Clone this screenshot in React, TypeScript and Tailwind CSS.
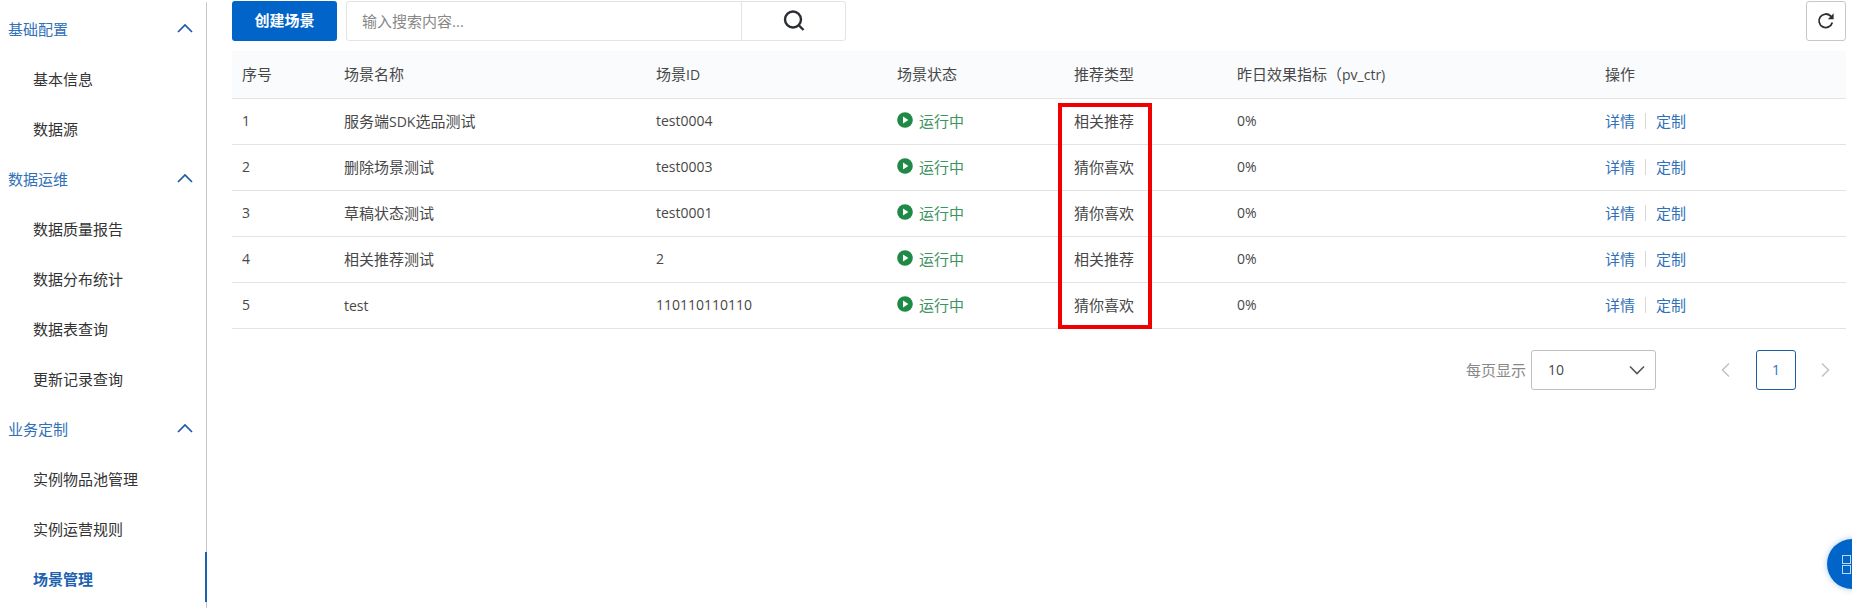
import React from "react";

const font = { fontFamily: '"Open Sans","Noto Sans CJK SC",sans-serif' };

const groups = [
  { title: "基础配置", items: ["基本信息", "数据源"] },
  { title: "数据运维", items: ["数据质量报告", "数据分布统计", "数据表查询", "更新记录查询"] },
  { title: "业务定制", items: ["实例物品池管理", "实例运营规则", "场景管理"] },
];

const rows: [string, React.ReactNode, string, string][] = [
  ["1", <>服务端<span className="text-[14px]">SDK</span>选品测试</>, "test0004", "相关推荐"],
  ["2", "删除场景测试", "test0003", "猜你喜欢"],
  ["3", "草稿状态测试", "test0001", "猜你喜欢"],
  ["4", "相关推荐测试", "2", "相关推荐"],
  ["5", <span className="text-[14px]">test</span>, "110110110110", "猜你喜欢"],
];

function Chevron({ d, className }: { d: string; className: string }) {
  return (
    <svg viewBox="0 0 16 16" fill="none" stroke="currentColor" className={className}>
      <path d={d} />
    </svg>
  );
}

function Sidebar() {
  return (
    <aside className="w-[207px] shrink-0 h-[606px] mt-[2px] border-r border-[#c8c8c8] pt-[2px]">
      {groups.map((g) => (
        <div key={g.title}>
          <div className="h-[50px] flex items-center justify-between pl-[8px] pr-[13px] text-[#2f70b8]">
            <span>{g.title}</span>
            <Chevron d="M1 11 8 4l7 7" className="w-[16px] h-[16px] stroke-[1.7] text-[#1a5aa5]" />
          </div>
          {g.items.map((it) => {
            const active = it === "场景管理";
            return (
              <div
                key={it}
                className={
                  active
                    ? "relative h-[50px] flex items-center pl-[33px] font-bold text-[#1c62b0]"
                    : "h-[50px] flex items-center pl-[33px] text-[#333333]"
                }
              >
                {it}
                {active && <span className="absolute right-[-1px] top-[-2px] w-[2px] h-[50px] bg-[#1c62b0]" />}
              </div>
            );
          })}
        </div>
      ))}
    </aside>
  );
}

function Status() {
  return (
    <span className="flex items-center gap-[6px] text-[#3c9460]">
      <svg viewBox="0 0 16 16" className="w-[16px] h-[16px] -translate-y-px">
        <circle cx="8" cy="8" r="7.8" fill="#1f8a45" />
        <path d="M6 4.6 11.4 8 6 11.4Z" fill="#fff" />
      </svg>
      运行中
    </span>
  );
}

export default function App() {
  return (
    <div
      style={font}
      className="relative flex w-[1852px] h-[608px] overflow-hidden bg-white text-[15px] leading-[20px] text-[#484848]"
    >
      <Sidebar />
      <main className="flex-1 pl-[25px] pr-[6px] pt-[1px]">
        <div className="flex items-center justify-between h-[40px]">
          <div className="flex h-full">
            <button className="w-[105px] h-[40px] pb-[3px] rounded-[3px] bg-[#0064c8] text-white font-bold text-[15px]">
              创建场景
            </button>
            <div className="ml-[9px] flex w-[500px] h-[40px] rounded-[3px] border border-[#e3e3e3]">
              <div className="flex-1 flex items-center pl-[15px] text-[#888888]">输入搜索内容...</div>
              <div className="w-[104px] flex items-center justify-center border-l border-[#e3e3e3]">
                <svg viewBox="0 0 24 24" fill="none" stroke="#2b2f33" strokeWidth="2.4" className="w-[24px] h-[24px]">
                  <circle cx="11" cy="10.5" r="8" />
                  <path d="m17 16.5 4.5 4.5" />
                </svg>
              </div>
            </div>
          </div>
          <button className="w-[40px] h-[40px] rounded-[3px] border border-[#c8c8c8] flex items-center justify-center">
            <svg viewBox="0 0 16 16" fill="none" stroke="#2b2f33" strokeWidth="1.6" className="w-[18px] h-[18px]">
              <path d="M13.6 9.4A6 6 0 1 1 12.2 3.7L14 5.4" />
              <path d="M14.8 1.2v5.2H9.6Z" fill="#2b2f33" stroke="none" />
            </svg>
          </button>
        </div>

        <table className="mt-[10px] w-[1614px] table-fixed border-collapse text-left">
          <colgroup>
            <col className="w-[102px]" />
            <col className="w-[312px]" />
            <col className="w-[241px]" />
            <col className="w-[177px]" />
            <col className="w-[163px]" />
            <col className="w-[368px]" />
            <col />
          </colgroup>
          <thead>
            <tr className="h-[47px] bg-[#f9fbfd] border-b border-[#e3e3e3]">
              {[
                "序号",
                "场景名称",
                <>场景<span className="text-[14px]">ID</span></>,
                "场景状态",
                "推荐类型",
                <>昨日效果指标（<span className="text-[14px]">pv_ctr)</span></>,
                "操作",
              ].map((h, i) => (
                <th key={i} className="pl-[10px] font-normal text-[#484848]">
                  {h}
                </th>
              ))}
            </tr>
          </thead>
          <tbody>
            {rows.map((r) => (
              <tr key={r[0]} className="h-[46px] border-b border-[#e3e3e3]">
                <td className="pl-[10px] text-[14px]">{r[0]}</td>
                <td className="pl-[10px]">{r[1]}</td>
                <td className="pl-[10px] text-[14px]">{r[2]}</td>
                <td className="pl-[10px]">
                  <Status />
                </td>
                <td className="pl-[10px]">{r[3]}</td>
                <td className="pl-[10px] text-[14px]">0%</td>
                <td className="pl-[10px]">
                  <span className="flex items-center text-[#2f70b8]">
                    详情
                    <span className="mx-[10px] w-px h-[16px] bg-[#d8d8d8]" />
                    定制
                  </span>
                </td>
              </tr>
            ))}
          </tbody>
        </table>

        <div className="mt-[21px] flex items-center justify-end h-[40px] w-[1614px]">
          <span className="text-[#888888] mr-[5px]">每页显示</span>
          <div className="w-[125px] h-[40px] rounded-[3px] border border-[#c0c0c0] flex items-center justify-between pl-[16px] pr-[10px] text-[14px] text-[#484848]">
            10
            <Chevron d="M1 4.5 8 11.5 15 4.5" className="w-[16px] h-[16px] stroke-[1.6] text-[#555555]" />
          </div>
          <Chevron d="M11 1.5 4.5 8l6.5 6.5" className="ml-[62px] w-[16px] h-[16px] stroke-[1.6] text-[#c4c4c4]" />
          <div className="ml-[22px] w-[40px] h-[40px] rounded-[3px] border border-[#1c5f9f] flex items-center justify-center text-[14px] text-[#2f70b8]">
            1
          </div>
          <Chevron d="M5 1.5 11.5 8 5 14.5" className="ml-[21px] mr-[13px] w-[16px] h-[16px] stroke-[1.6] text-[#c4c4c4]" />
        </div>
      </main>

      <div className="absolute left-[1058px] top-[103px] w-[94px] h-[226px] border-[4px] border-[#f00000] pointer-events-none" />

      <div className="absolute left-[1827px] top-[539px] w-[50px] h-[50px] rounded-full bg-[#0064c8] shadow-[0_0_6px_rgba(0,100,200,0.35)] pt-[16px] pl-[15px]">
        <div className="w-[9px] h-[9px] border border-[#bcd8f2]" />
        <div className="mt-[1px] w-[9px] h-[9px] border border-[#bcd8f2]" />
      </div>
    </div>
  );
}
